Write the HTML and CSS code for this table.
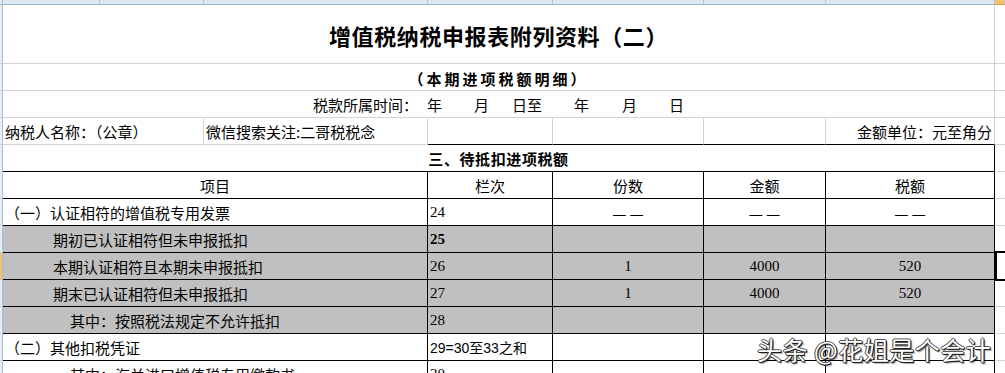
FILE: index.html
```html
<!DOCTYPE html>
<html lang="zh-CN">
<head>
<meta charset="utf-8">
<title>增值税纳税申报表附列资料（二）</title>
<link rel="stylesheet" href="styles.css">
</head>
<body>
<div class="page">
  <div class="sheet">
    <!-- column header strip -->
    <div class="rh hd"></div>
    <div class="ch"></div><div class="ch"></div><div class="ch"></div><div class="ch"></div>
    <div class="ch"></div><div class="ch"></div><div class="ch"></div><div class="ch on"></div>

    <!-- title -->
    <div class="rh"></div>
    <div class="c span7 center title">增值税纳税申报表附列资料（二）</div>
    <div class="c x"></div>

    <!-- subtitle -->
    <div class="rh"></div>
    <div class="c span7 center subtitle">（本期进项税额明细）</div>
    <div class="c x"></div>

    <!-- period -->
    <div class="rh"></div>
    <div class="c span7 center period">
      <span>税款所属时间：</span><span class="p1">年</span><span class="p2">月</span><span class="p3">日至</span><span class="p2">年</span><span class="p4">月</span><span class="p2">日</span>
    </div>
    <div class="c x"></div>

    <!-- taxpayer -->
    <div class="rh"></div>
    <div class="c span2">纳税人名称：（公章）</div>
    <div class="c">微信搜索关注:二哥税税念</div>
    <div class="c bb"></div>
    <div class="c bb"></div>
    <div class="c bb"></div>
    <div class="c bb right">金额单位：元至角分</div>
    <div class="c x"></div>

    <!-- section title -->
    <div class="rh"></div>
    <div class="c span7 center section k">三、待抵扣进项税额</div>
    <div class="c x"></div>

    <!-- column heads -->
    <div class="rh"></div>
    <div class="c span3 center k">项目</div>
    <div class="c center k">栏次</div>
    <div class="c center k">份数</div>
    <div class="c center k">金额</div>
    <div class="c center k">税额</div>
    <div class="c x"></div>

    <!-- 24 -->
    <div class="rh"></div>
    <div class="c span3 k">（一）认证相符的增值税专用发票</div>
    <div class="c k num">24</div>
    <div class="c center k dashes"><span>—</span><span>—</span></div>
    <div class="c center k dashes"><span>—</span><span>—</span></div>
    <div class="c center k dashes"><span>—</span><span>—</span></div>
    <div class="c x"></div>

    <!-- 25 -->
    <div class="rh"></div>
    <div class="c span3 k g ind1">期初已认证相符但未申报抵扣</div>
    <div class="c k g num bold">25</div>
    <div class="c k g"></div>
    <div class="c k g"></div>
    <div class="c k g"></div>
    <div class="c x"></div>

    <!-- 26 -->
    <div class="rh on"></div>
    <div class="c span3 k g ind1">本期认证相符且本期未申报抵扣</div>
    <div class="c k g num">26</div>
    <div class="c center k g num">1</div>
    <div class="c center k g num">4000</div>
    <div class="c center k g num">520</div>
    <div class="c x selcell"><span class="sel"></span></div>

    <!-- 27 -->
    <div class="rh"></div>
    <div class="c span3 k g ind1">期末已认证相符但未申报抵扣</div>
    <div class="c k g num">27</div>
    <div class="c center k g num">1</div>
    <div class="c center k g num">4000</div>
    <div class="c center k g num">520</div>
    <div class="c x"></div>

    <!-- 28 -->
    <div class="rh"></div>
    <div class="c span3 k g ind2">其中：按照税法规定不允许抵扣</div>
    <div class="c k g num">28</div>
    <div class="c k g"></div>
    <div class="c k g"></div>
    <div class="c k g"></div>
    <div class="c x"></div>

    <!-- 29 -->
    <div class="rh"></div>
    <div class="c span3 k">（二）其他扣税凭证</div>
    <div class="c k sans">29=30至33之和</div>
    <div class="c k"></div>
    <div class="c k"></div>
    <div class="c k"></div>
    <div class="c x"></div>

    <!-- 30 -->
    <div class="rh"></div>
    <div class="c span3 k ind2">其中：海关进口增值税专用缴款书</div>
    <div class="c k num">30</div>
    <div class="c k"></div>
    <div class="c k"></div>
    <div class="c k"></div>
    <div class="c x"></div>
  </div>

  <div class="watermark">头条 @花姐是个会计</div>
</div>
</body>
</html>
```

FILE: styles.css
```css
html, body {
  margin: 0;
  padding: 0;
  background: #ffffff;
}

body {
  width: 1005px;
  height: 373px;
  overflow: hidden;
  font-family: "Noto Sans CJK SC", "Noto Sans", sans-serif;
  color: #000;
}

.page {
  position: relative;
  width: 1005px;
  height: 373px;
  overflow: hidden;
}

.sheet {
  display: grid;
  grid-template-columns: 3px 97px 104px 224px 125px 151px 122px 169px 10px;
  grid-template-rows: 5px 59px repeat(12, 27px);
  width: 1005px;
}

/* column header strip */
.ch {
  box-sizing: border-box;
  background: #dfe7f1;
  border-right: 1px solid #b7c6d8;
  border-bottom: 1px solid #9fb3cb;
}
.ch.on {
  background: #f6c16a;
  border-bottom-color: #e29a3a;
}

/* row header strip */
.rh {
  box-sizing: border-box;
  background: #e8eef6;
  border-right: 1px solid #a9b9cd;
  border-bottom: 1px solid #c3cfdd;
}
.rh.hd {
  background: #dfe7f1;
  border-bottom-color: #9fb3cb;
}
.rh.on {
  background: #f6c16a;
}

/* cells */
.c {
  box-sizing: border-box;
  border-right: 1px solid #d4d4d4;
  border-bottom: 1px solid #d4d4d4;
  display: flex;
  align-items: center;
  padding: 1px 2px 0 2px;
  font-size: 15px;
  line-height: 1;
  white-space: nowrap;
  overflow: visible;
  min-width: 0;
}

.span2 { grid-column: span 2; }
.span3 { grid-column: span 3; }
.span7 { grid-column: span 7; }

.center { justify-content: center; }
.right { justify-content: flex-end; }

.title {
  font-size: 22px;
  font-weight: 700;
  letter-spacing: 0.6px;
}

.subtitle {
  font-size: 15px;
  font-weight: 700;
  letter-spacing: 3px;
  padding-top: 3px;
}

.period .p1 { margin-left: 9px; }
.period .p2 { margin-left: 32px; }
.period .p3 { margin-left: 23px; }
.period .p4 { margin-left: 33px; }

.bb { border-bottom-color: #000; }

.section {
  font-weight: 700;
  letter-spacing: 0.6px;
}

/* black-bordered table cells */
.k {
  border-right-color: #000;
  border-bottom-color: #000;
}

.g { background: #c0c0c0; }

.ind1 { padding-left: 50px; }
.ind2 { padding-left: 67px; }

.num {
  font-family: "Liberation Serif", "Noto Sans CJK SC", serif;
  font-size: 15px;
}
.bold { font-weight: 700; }

.sans {
  font-family: "Liberation Sans", "Noto Sans CJK SC", sans-serif;
  font-size: 14px;
}

.dashes {
  gap: 3px;
  font-size: 16px;
}

/* extra column at the right edge */
.x {
  border-right: 0;
  border-bottom-color: #d4d4d4;
}

.selcell { position: relative; }
.sel {
  position: absolute;
  left: 0;
  top: -2px;
  right: -4px;
  bottom: -2px;
  border: 2px solid #000;
  box-sizing: border-box;
}

.watermark {
  position: absolute;
  left: 757px;
  top: 334px;
  font-size: 25px;
  line-height: 30px;
  color: #ffffff;
  letter-spacing: 0.5px;
  white-space: nowrap;
  text-shadow:
    1px 1px 0 #1e1e1e,
    -1px 0 0 #444,
    0 -1px 0 #555,
    1px 0 0 #222,
    0 1px 0 #222,
    2px 2px 1px rgba(0, 0, 0, 0.35);
}
```
